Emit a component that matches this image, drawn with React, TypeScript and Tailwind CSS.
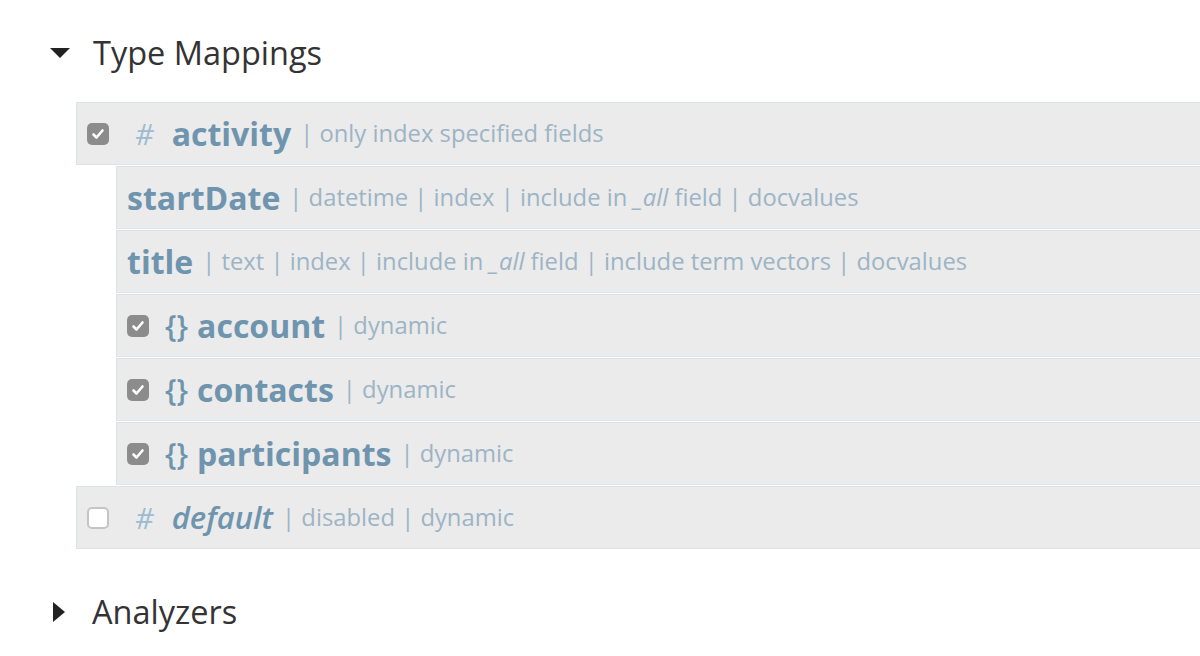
import React from "react";

const font = { fontFamily: '"Open Sans", "Noto Sans", sans-serif' };

function Check({ checked }: { checked: boolean }) {
  if (!checked)
    return <div className="w-[22px] h-[22px] rounded-[5px] border-2 border-[#c4c4c4] bg-white shrink-0" />;
  return (
    <div className="w-[22px] h-[22px] rounded-[5px] bg-[#8c8c8c] flex items-center justify-center shrink-0">
      <svg width="14" height="14" viewBox="0 0 14 14">
        <path d="M2.5 7.5 L5.5 10.5 L11.5 3.5" fill="none" stroke="white" strokeWidth="2.6" strokeLinecap="round" strokeLinejoin="round" />
      </svg>
    </div>
  );
}

function Sep({ children }: { children: React.ReactNode }) {
  return <span className="text-[23.8px] text-[#9db4c5] ml-[9px]">{children}</span>;
}

function Row({ children }: { children: React.ReactNode }) {
  return (
    <div className="h-[63px] mb-[1px] border border-[#dbe3eb] bg-[#ebebeb] flex items-center pl-[10px]">
      {children}
    </div>
  );
}

function Name({ children, italic }: { children: React.ReactNode; italic?: boolean }) {
  return (
    <span
      className={
        "font-bold text-[#6f94ae] leading-none " + (italic ? "italic font-semibold text-[31px]" : "text-[32px]")
      }
    >
      {children}
    </span>
  );
}

function Braces() {
  return <span className="text-[30px] font-semibold text-[#6f94ae] ml-[16px] mr-[9px] leading-none">{"{}"}</span>;
}

function Hash() {
  return <span className="text-[29px] text-[#9cbad0] italic ml-[26px] mr-[18px] leading-none">#</span>;
}

export default function App() {
  return (
    <div className="w-[1200px] h-[656px] overflow-hidden bg-white" style={font}>
      <div className="w-[1320px]">
        <div className="flex items-center h-[52px] mt-[27px] pl-[50px]">
          <svg width="20" height="12" viewBox="0 0 20 12" className="mr-[23px]">
            <path d="M0 1 L20 1 L10 11 Z" fill="#222" />
          </svg>
          <span className="text-[32.5px] text-[#333]">Type Mappings</span>
        </div>
        <div className="pl-[76px] mt-[23px]">
          <Row>
            <Check checked />
            <Hash />
            <Name>activity</Name>
            <Sep>| only index specified fields</Sep>
          </Row>
          <div className="pl-[40px] mb-[1px]">
            <Row>
              <Name>startDate</Name>
              <Sep>
                | datetime | index | include in <i>_all</i> field | docvalues
              </Sep>
            </Row>
            <Row>
              <Name>title</Name>
              <Sep>
                | text | index | include in <i>_all</i> field | include term vectors | docvalues
              </Sep>
            </Row>
            <Row>
              <Check checked />
              <Braces />
              <Name>account</Name>
              <Sep>| dynamic</Sep>
            </Row>
            <Row>
              <Check checked />
              <Braces />
              <Name>contacts</Name>
              <Sep>| dynamic</Sep>
            </Row>
            <Row>
              <Check checked />
              <Braces />
              <Name>participants</Name>
              <Sep>| dynamic</Sep>
            </Row>
          </div>
          <Row>
            <Check checked={false} />
            <Hash />
            <Name italic>default</Name>
            <Sep>| disabled | dynamic</Sep>
          </Row>
        </div>
        <div className="flex items-center h-[52px] mt-[37px] pl-[52px]">
          <svg width="14" height="20" viewBox="0 0 14 20" className="mr-[26px]">
            <path d="M1 0 L13 10 L1 20 Z" fill="#222" />
          </svg>
          <span className="text-[32.5px] text-[#333]">Analyzers</span>
        </div>
      </div>
    </div>
  );
}
